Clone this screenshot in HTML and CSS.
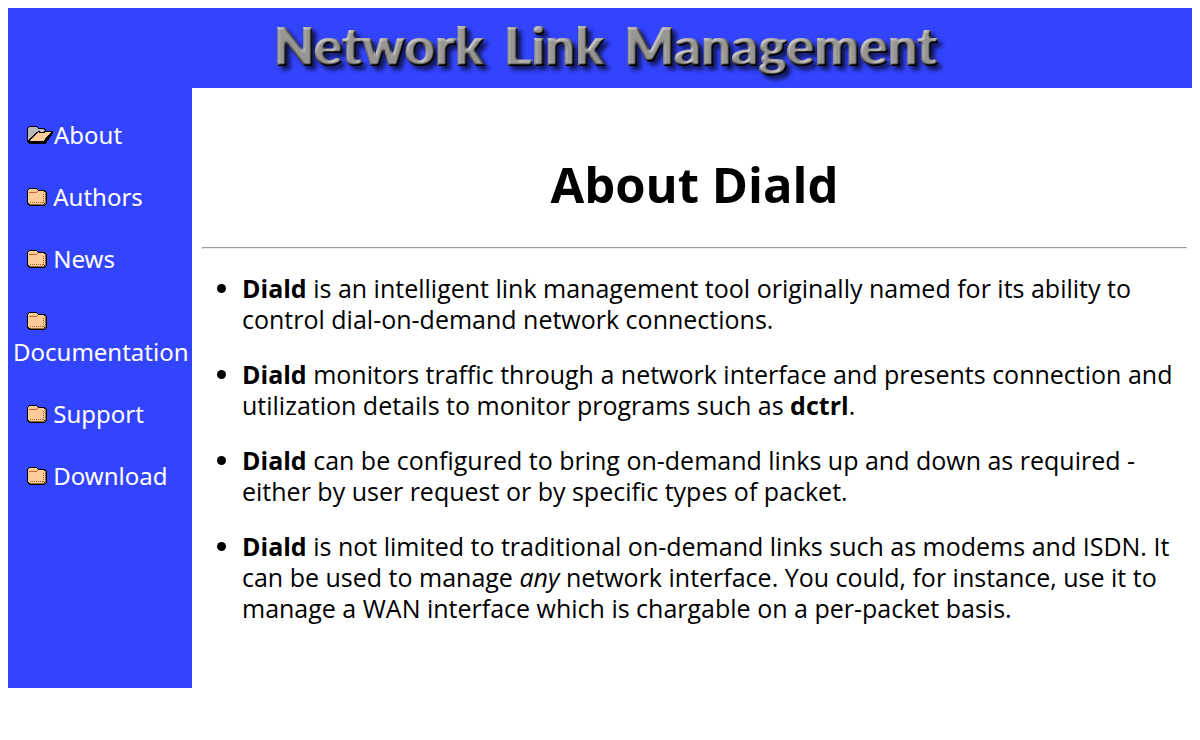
FILE: index.html
```html
<!DOCTYPE html>
<html lang="en">
<head>
<meta charset="utf-8">
<title>Network Link Management</title>
<link rel="stylesheet" href="styles.css">
</head>
<body>
<svg class="defs" width="0" height="0" aria-hidden="true">
  <defs>
    <filter id="bevel" x="-5%" y="-20%" width="110%" height="150%" color-interpolation-filters="sRGB">
      <feMorphology in="SourceAlpha" operator="dilate" radius="1 0" result="shape"/>
      <feGaussianBlur in="shape" stdDeviation="1" result="height"/>
      <feDiffuseLighting in="height" surfaceScale="3" diffuseConstant="1.05" lighting-color="#c2c0bd" result="light">
        <feDistantLight azimuth="235" elevation="48"/>
      </feDiffuseLighting>
      <feComposite in="light" in2="shape" operator="in" result="face"/>
      <feGaussianBlur in="shape" stdDeviation="2" result="soft"/>
      <feOffset in="soft" dx="4" dy="4" result="moved"/>
      <feComponentTransfer in="moved" result="shadow"><feFuncA type="linear" slope="0.65"/></feComponentTransfer>
      <feMerge><feMergeNode in="shadow"/><feMergeNode in="face"/></feMerge>
    </filter>
    <symbol id="folder" viewBox="0 0 26 18">
      <path fill="#000" d="M2 0h8v1h1v1h7v1h1v1h1v12h-1v1h-1v1H2v-1H1v-1H0V2h1V1h1z"/>
      <path fill="#963" d="M18 4h1v12h-1v1H3v-1h15z"/>
      <path fill="#fc9" d="M2 1h8v1h1v1h6v1h1v11h-1v1H2v-1H1V2h1z"/>
      <path stroke="#c63" d="M2 4.500h8M10 3.500h1"/>
      <path stroke="#963" stroke-dasharray="1 1" d="M3 14.500h14M16.500 6v9"/>
    </symbol>
    <symbol id="folder-open" viewBox="0 0 26 18">
      <path fill="#000" d="M2 0h8v1h1v1h7v1h1v2h8v2h-1v1h-1v2h-1v1h-1v1h-1v2h-1v1h-1v2h-1v1H2v-1H1v-1H0V2h1V1h1z"/>
      <path fill="#bbb" d="M2 1h8v1h1v1h6v1h1v1h-1v1h-4V5h-2v1H9v1H8v1H7v1H6v1H5v1H4v1H3v1H2v1H1V2h1z"/>
      <path fill="#fc9" d="M11 6h1v1h6V6h6v1h-1v1h-1v1h-1v1h-1v1h-1v1h-1v2h-1v1H3v-1h1v-1h1v-1h1v-1h1v-1h1V9h1V8h1V7h1z"/>
    </symbol>
  </defs>
</svg>
<header class="banner">
  <div class="logo"><span>Network</span><span>Link</span><span>Management</span></div>
</header>
<div class="page">
  <nav class="menu">
    <a href="#about"><svg class="icon-open" viewBox="0 0 26 18" aria-hidden="true"><use href="#folder-open" width="26" height="18"/></svg>About</a>
    <a href="#authors"><svg class="icon" viewBox="0 0 20 18" aria-hidden="true"><use href="#folder" width="26" height="18"/></svg> Authors</a>
    <a href="#news"><svg class="icon" viewBox="0 0 20 18" aria-hidden="true"><use href="#folder" width="26" height="18"/></svg> News</a>
    <a href="#documentation"><svg class="icon" viewBox="0 0 20 18" aria-hidden="true"><use href="#folder" width="26" height="18"/></svg> Documentation</a>
    <a href="#support"><svg class="icon" viewBox="0 0 20 18" aria-hidden="true"><use href="#folder" width="26" height="18"/></svg> Support</a>
    <a href="#download"><svg class="icon" viewBox="0 0 20 18" aria-hidden="true"><use href="#folder" width="26" height="18"/></svg> Download</a>
  </nav>
  <main class="content" id="about">
    <h1>About Diald</h1>
    <hr>
    <ul>
      <li><b>Diald</b> is an intelligent link management tool originally named for its ability to control dial-on-demand network connections.</li>
      <li><b>Diald</b> monitors traffic through a network interface and presents connection and utilization details to monitor programs such as <b>dctrl</b>.</li>
      <li><b>Diald</b> can be configured to bring on-demand links up and down as required - either by user request or by specific types of packet.</li>
      <li><b>Diald</b> is not limited to traditional on-demand links such as modems and ISDN. It can be used to manage <i>any</i> network interface. You could, for instance, use it to manage a WAN interface which is chargable on a per-packet basis.</li>
    </ul>
  </main>
</div>
</body>
</html>
```
FILE: styles.css
```css
body {
  margin: 8px;
  background: #fff;
  color: #000;
  font-family: "Open Sans", "Noto Sans", sans-serif;
  font-size: 25px;
  line-height: 31px;
}
.defs { position: absolute; }
.banner {
  display: flex;
  justify-content: center;
  align-items: center;
  height: 80px;
  background: #34f;
}
.logo {
  display: flex;
  gap: 20px;
  padding-left: 12px;
  color: #999;
  font-family: Lato, sans-serif;
  font-size: 53px;
  font-weight: 900;
  line-height: 76px;
  padding-bottom: 4px;
  filter: url(#bevel);
}
.page { display: flex; }
.menu {
  box-sizing: border-box;
  flex: none;
  width: 184px;
  padding: 31px 0 0 5px;
  background: #34f;
  font-family: "Noto Sans", "Open Sans", sans-serif;
  font-size: 24px;
}
.menu a {
  display: block;
  margin-bottom: 31px;
  color: #fff;
  text-decoration: none;
  text-indent: 14px;
}
.icon { width: 20px; height: 18px; }
.icon-open { width: 26px; height: 18px; margin-right: 1px; }
.content {
  flex: 1;
  min-width: 0;
  padding: 64px 5px 64px 10px;
}
h1 {
  margin: 0 0 30px;
  font-size: 49px;
  line-height: 65px;
  text-align: center;
}
hr { margin: 0 0 24px; }
ul { margin: 0; padding-left: 40px; }
li { margin-bottom: 24px; }
li:last-child { margin-bottom: 0; }
```
